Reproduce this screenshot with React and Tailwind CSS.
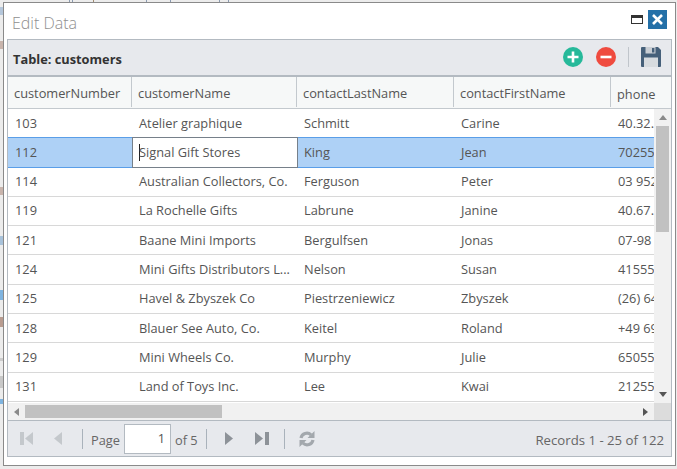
const columns = [
  { name: "customerNumber", width: "w-[124px]" },
  { name: "customerName", width: "w-[165px]" },
  { name: "contactLastName", width: "w-[157px]" },
  { name: "contactFirstName", width: "w-[157px]" },
  { name: "phone", width: "w-[44px]" },
];

const rows = [
  ["103", "Atelier graphique", "Schmitt", "Carine", "40.32.2555"],
  ["112", "Signal Gift Stores", "King", "Jean", "7025551838"],
  ["114", "Australian Collectors, Co.", "Ferguson", "Peter", "03 9520 4555"],
  ["119", "La Rochelle Gifts", "Labrune", "Janine", "40.67.8555"],
  ["121", "Baane Mini Imports", "Bergulfsen", "Jonas", "07-98 9555"],
  ["124", "Mini Gifts Distributors L...", "Nelson", "Susan", "4155551450"],
  ["125", "Havel & Zbyszek Co", "Piestrzeniewicz", "Zbyszek", "(26) 642-7555"],
  ["128", "Blauer See Auto, Co.", "Keitel", "Roland", "+49 69 66 90 2555"],
  ["129", "Mini Wheels Co.", "Murphy", "Julie", "6505555787"],
  ["131", "Land of Toys Inc.", "Lee", "Kwai", "2125557818"],
];

// bits of the page behind the dialog that peek out around it
const behind = [
  "left-[69px] top-0 w-px h-[2px] bg-[#8a9ab0]",
  "left-[72px] top-0 w-px h-[2px] bg-[#8a9ab0]",
  "left-[93px] top-0 w-px h-[2px] bg-[#a08a70]",
  "left-[146px] top-0 w-px h-[2px] bg-[#8a9ab0]",
  "left-[170px] top-0 w-px h-[2px] bg-[#8a9ab0]",
  "left-[219px] top-0 w-px h-[2px] bg-[#8a9ab0]",
  "left-[228px] top-0 w-px h-[2px] bg-[#8a9ab0]",
  "left-0 top-[7px] w-[3px] h-[8px] bg-[#b4c6da]",
  "left-0 top-[41px] w-[3px] h-[8px] bg-[#c8b4ac]",
  "left-0 top-[187px] w-[3px] h-[8px] bg-[#c8b4ac]",
  "left-0 top-[236px] w-[3px] h-[9px] bg-[#a8c2da]",
  "left-0 top-[290px] w-[3px] h-[10px] bg-[#7fb4e0]",
  "left-0 top-[317px] w-[3px] h-[10px] bg-[#b89c90]",
  "left-0 top-[358px] w-[3px] h-[3px] bg-[#cccccc]",
  "left-0 top-[376px] w-[3px] h-[12px] bg-[#c8c8c8]",
  "left-0 top-[399px] w-[3px] h-[5px] bg-[#7fb4e0]",
];

function Row({ row, selected }) {
  return (
    <div className={`flex h-[29.3px] shrink-0 border-b ${selected ? "bg-[#aed1f6] border-[#5a9ee8] shadow-[0_-1px_0_#5a9ee8]" : "border-[#d8d8d8]"}`}>
      {row.map((cell, i) => {
        if (selected && i === 1) {
          return (
            <div key={i} className="w-[166px] -mr-px shrink-0 bg-white border border-[#76808a] -my-px flex items-center pl-[6px] text-[#555] whitespace-nowrap">
              <span className="w-px h-[17px] bg-[#222] -mr-px"></span>
              {cell}
            </div>
          );
        }
        return (
          <div key={i} className={`${columns[i].width} shrink-0 pl-[7px] flex items-center whitespace-nowrap overflow-hidden text-[#555]`}>
            {cell}
          </div>
        );
      })}
    </div>
  );
}

function PagerSeparator() {
  return <div className="w-px h-[20px] bg-[#a9b2bb]"></div>;
}

export default function App() {
  return (
    <div className="relative w-[677px] h-[469px] bg-[#ececec] overflow-hidden pt-[2px] pl-[3px] pr-[1px] font-['Open_Sans','Noto_Sans',sans-serif] text-[12.8px]">
      {behind.map((c) => (
        <div key={c} className={`absolute ${c}`}></div>
      ))}
      <div className="relative h-[464px] bg-white border border-[#8a8a8a] flex flex-col pl-[3px] pr-[3px] pb-[8px]">
        {/* Title */}
        <div className="h-[36px] shrink-0 flex items-center justify-between pr-[5px]">
          <span className="pl-[5px] pt-[4px] text-[16px] font-light text-[#8f8f8f]">Edit Data</span>
          <div className="flex items-center gap-[5px] pb-[4px]">
            <div className="w-[12px] h-[9px] border border-[#333] border-t-[3px]"></div>
            <div className="w-[19px] h-[19px] bg-[#2470a8] flex items-center justify-center">
              <svg width="13" height="13" viewBox="0 0 13 13">
                <path d="M2 2l9 9M11 2l-9 9" stroke="#fff" strokeWidth="2.6" fill="none" />
              </svg>
            </div>
          </div>
        </div>

        <div className="flex-1 min-h-0 flex flex-col border border-[#b3bac1]">
          {/* Toolbar */}
          <div className="h-[37px] shrink-0 bg-[#e7e9ed] border-b-2 border-[#b3bac1] flex items-center pl-[5px] pr-[10px]">
            <span className="font-bold text-[#333] pt-[4px]">Table: customers</span>
            <div className="ml-auto flex items-center mb-[1px]">
              <svg width="20" height="20" viewBox="0 0 20 20" className="mr-[13px]">
                <circle cx="10" cy="10" r="10" fill="#26b99a" />
                <path d="M10 4.5v11M4.5 10h11" stroke="#fff" strokeWidth="2.6" />
              </svg>
              <svg width="20" height="20" viewBox="0 0 20 20" className="mr-[12px]">
                <circle cx="10" cy="10" r="10" fill="#ef4b3f" />
                <path d="M4.5 10h11" stroke="#fff" strokeWidth="2.6" />
              </svg>
              <div className="w-px h-[20px] bg-[#c0c5cb] mr-[12px]"></div>
              <svg width="20" height="20" viewBox="0 0 20 20">
                <path d="M0 1a1 1 0 0 1 1-1h16l3 3v16a1 1 0 0 1-1 1H1a1 1 0 0 1-1-1z" fill="#46607a" />
                <rect x="4.5" y="0" width="10" height="6.5" fill="#c9ced4" />
                <rect x="11" y="1" width="2.4" height="4.5" fill="#46607a" />
                <rect x="3" y="10.5" width="14" height="9.5" fill="#d7dbdf" />
              </svg>
            </div>
          </div>

          {/* Header */}
          <div className="h-[32px] shrink-0 bg-[#f6f8f8] border-b border-[#c3c9ce] flex text-[#555] overflow-hidden">
            {columns.map((col, i) => (
              <div key={col.name} className={`${col.width} shrink-0 pl-[6px] pt-[4px] flex items-center whitespace-nowrap ${i < 4 ? "border-r border-[#c3c9ce] mb-[1px]" : ""}`}>
                {col.name}
              </div>
            ))}
          </div>

          {/* Grid with scrollbars */}
          <div className="flex-1 min-h-0 flex">
            <div className="flex-1 min-w-0 flex flex-col overflow-hidden bg-white">
              {rows.map((row, i) => (
                <Row key={row[0]} row={row} selected={i === 1} />
              ))}
            </div>
            <div className="w-[17px] shrink-0 bg-[#f1f1f1] flex flex-col items-center">
              <div className="h-[17px] shrink-0 flex items-center justify-center">
                <div className="w-0 h-0 border-x-[4px] border-x-transparent border-b-[5px] border-b-[#8a8a8a]"></div>
              </div>
              <div className="w-[13px] h-[106px] bg-[#c1c1c1]"></div>
              <div className="mt-auto h-[17px] shrink-0 flex items-center justify-center">
                <div className="w-0 h-0 border-x-[4px] border-x-transparent border-t-[5px] border-t-[#555]"></div>
              </div>
            </div>
          </div>
          <div className="h-[17px] shrink-0 bg-[#f1f1f1] flex items-center">
            <div className="w-[17px] shrink-0 flex justify-center">
              <div className="w-0 h-0 border-y-[4px] border-y-transparent border-r-[5px] border-r-[#8a8a8a]"></div>
            </div>
            <div className="w-[197px] h-[13px] bg-[#c1c1c1]"></div>
            <div className="ml-auto w-[17px] flex justify-center">
              <div className="w-0 h-0 border-y-[4px] border-y-transparent border-l-[5px] border-l-[#555]"></div>
            </div>
            <div className="w-[17px] h-[17px] bg-[#dcdcdc]"></div>
          </div>

          {/* Pager */}
          <div className="h-[36px] shrink-0 bg-[#e7e9ed] border-t border-[#b3bac1] flex items-center pl-[12px] pr-[7px] text-[#666]">
            <svg width="14" height="15" viewBox="0 0 14 15" className="mr-[20px]">
              <rect x="0" y="1" width="4" height="13" fill="#c4c8cc" />
              <path d="M13 1v13L5 7.5z" fill="#c4c8cc" />
            </svg>
            <svg width="9" height="15" viewBox="0 0 9 15" className="mr-[19px]">
              <path d="M8 1v13L0 7.5z" fill="#c4c8cc" />
            </svg>
            <PagerSeparator />
            <span className="ml-[8px] mr-[4px] pt-[4px]">Page</span>
            <div className="w-[47px] h-[30px] bg-white border border-[#b3bac1] flex items-center justify-end pr-[5px] text-[#555]">1</div>
            <span className="ml-[4px] mr-[8px] pt-[4px]">of 5</span>
            <PagerSeparator />
            <svg width="9" height="15" viewBox="0 0 9 15" className="ml-[18px] mr-[21px]">
              <path d="M0 1v13l8-6.5z" fill="#8d9298" />
            </svg>
            <svg width="14" height="15" viewBox="0 0 14 15" className="mr-[15px]">
              <path d="M0 1v13l8-6.5z" fill="#8d9298" />
              <rect x="10" y="1" width="4" height="13" fill="#8d9298" />
            </svg>
            <PagerSeparator />
            <svg width="18" height="18" viewBox="0 0 18 18" className="ml-[13px]">
              <path d="M3 8a6 6 0 0 1 10-3.2M15 10a6 6 0 0 1-10 3.2" stroke="#a3a8ad" strokeWidth="3.2" fill="none" />
              <path d="M16.5 1v7h-7zM1.5 17v-7h7z" fill="#a3a8ad" />
            </svg>
            <span className="ml-auto pt-[4px] text-[13.2px]">Records 1 - 25 of 122</span>
          </div>
        </div>
      </div>
    </div>
  );
}
